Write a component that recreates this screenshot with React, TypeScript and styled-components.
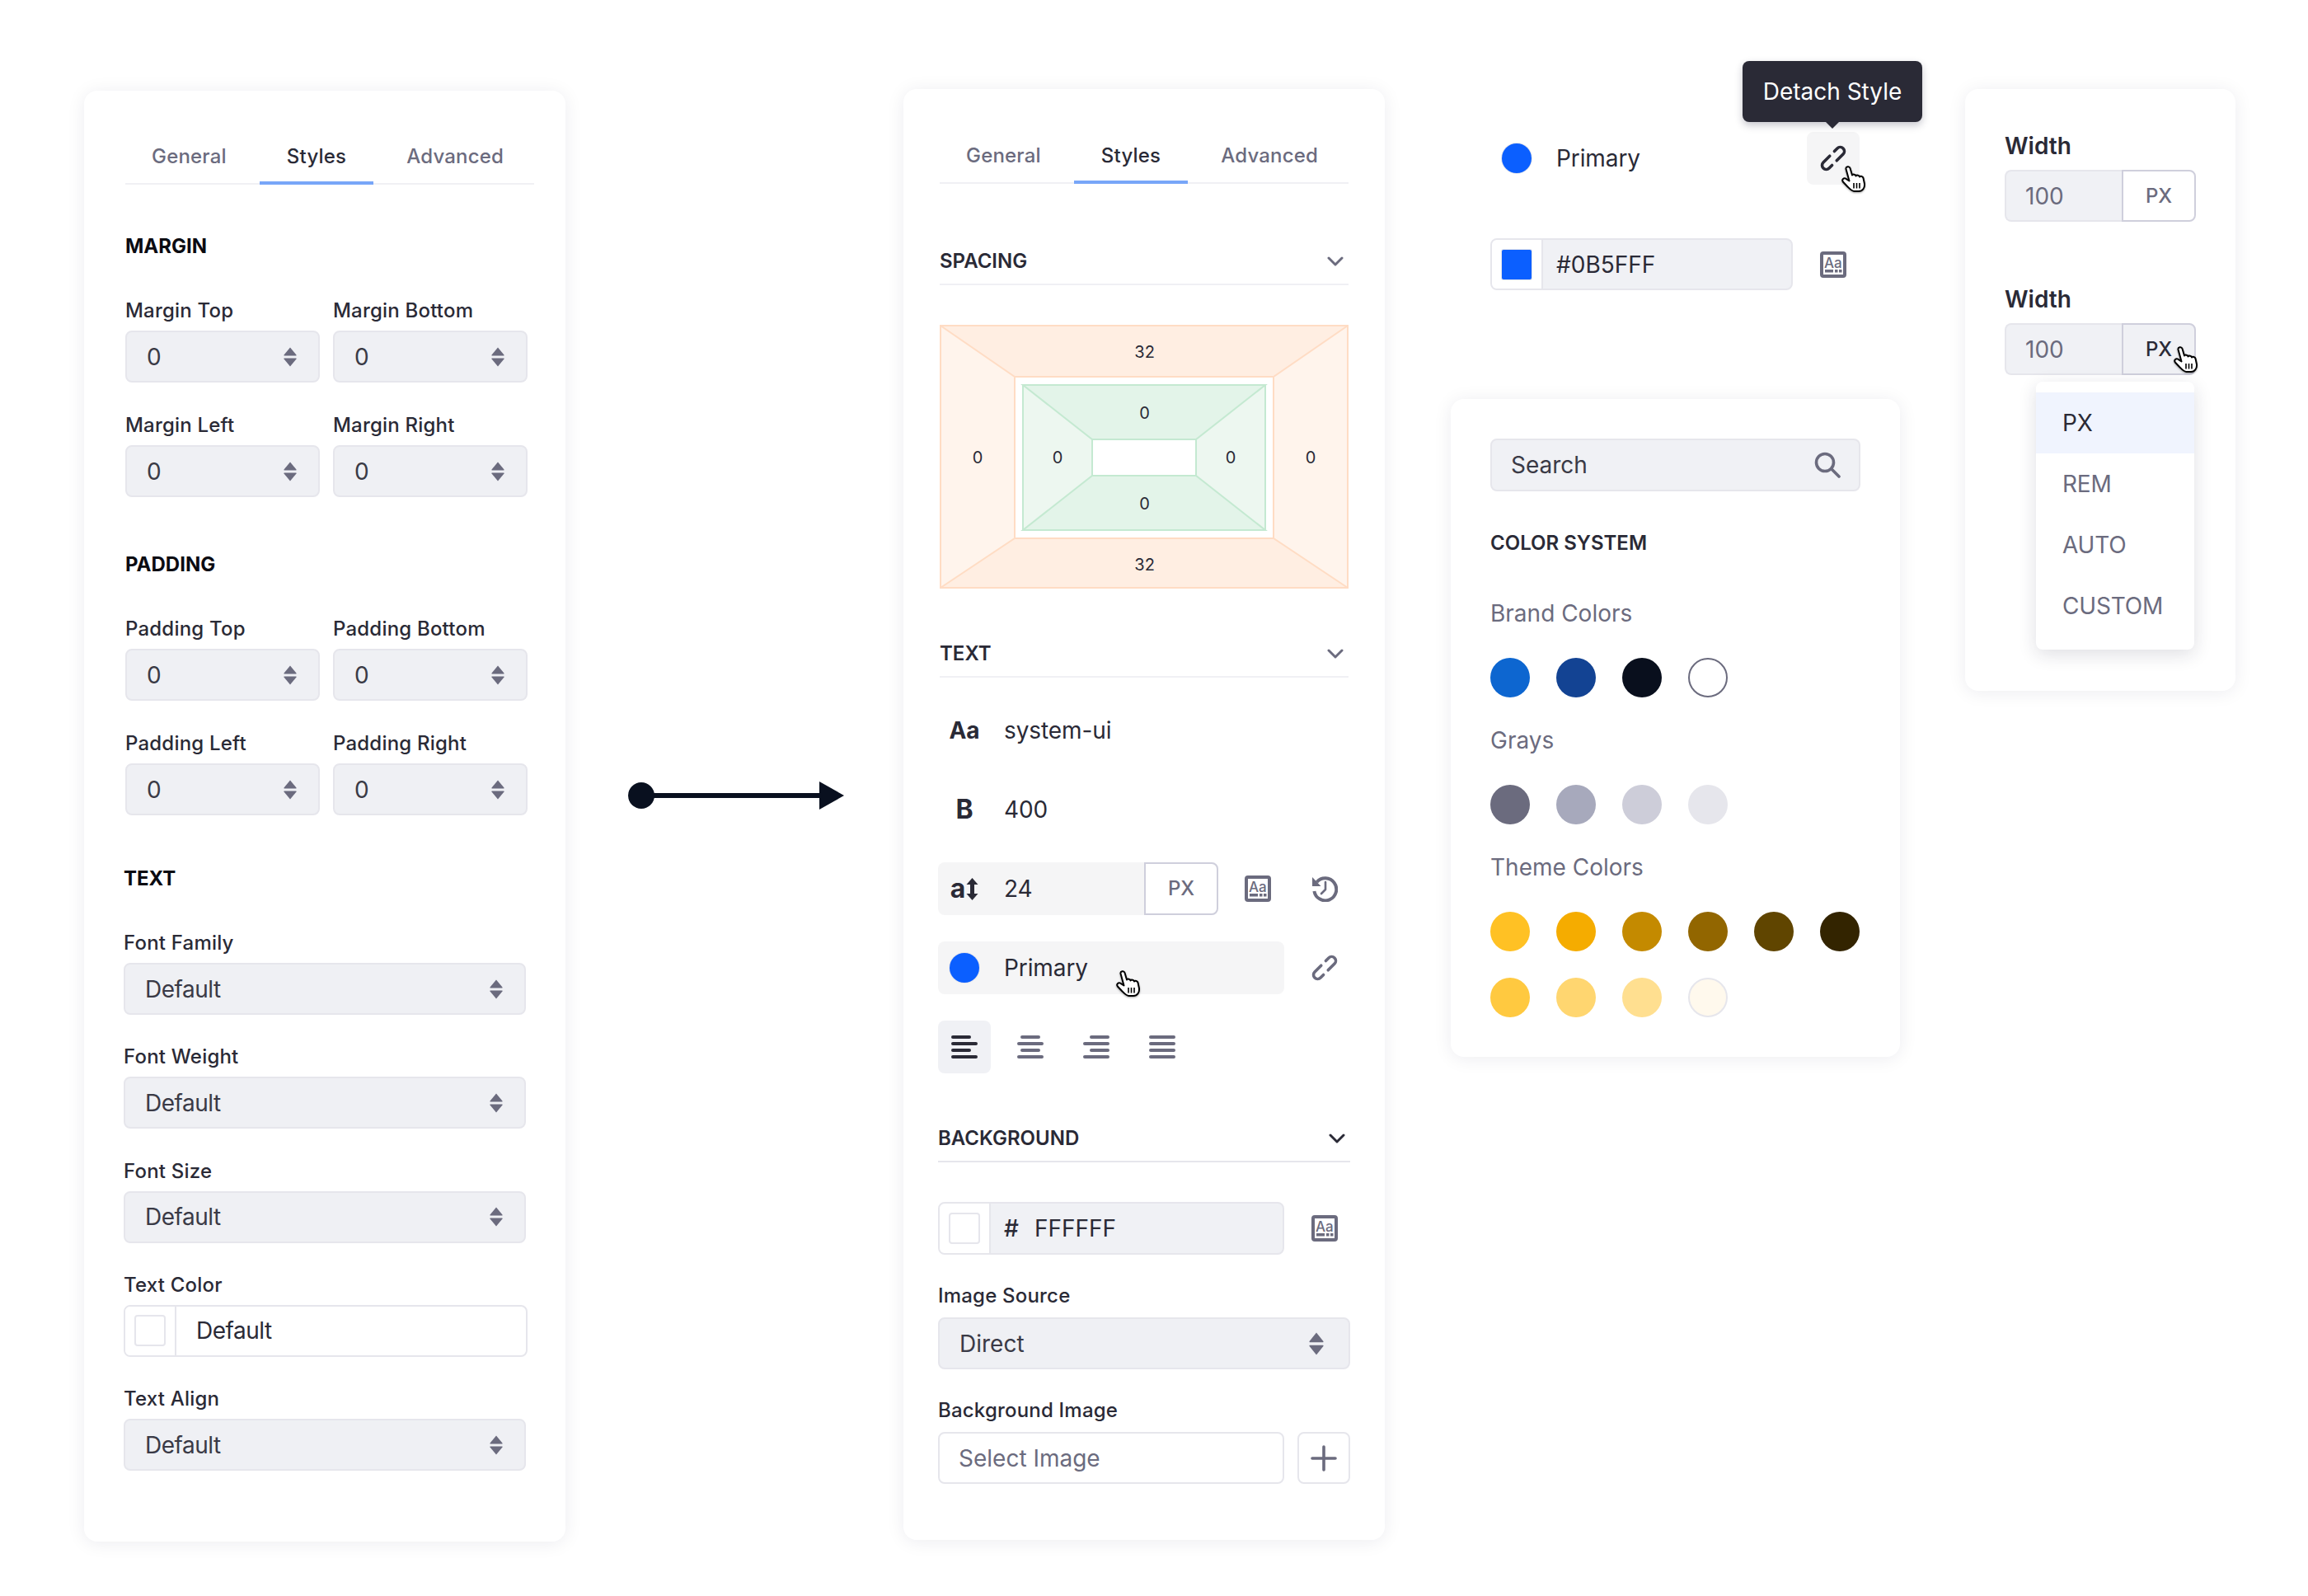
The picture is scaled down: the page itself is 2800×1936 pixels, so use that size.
import React from 'react';
import styled, { createGlobalStyle } from 'styled-components';

const GlobalStyle = createGlobalStyle`
  html, body {
    margin: 0;
    padding: 0;
    background: #fff;
  }
  body {
    font-family: Inter, "Liberation Sans", sans-serif;
    color: #2a2a36;
  }
  * {
    box-sizing: border-box;
  }
`;

const Page = styled.div`
  width: 2800px;
  height: 1936px;
  padding-left: 102px;
  display: flex;
  align-items: flex-start;
  overflow: hidden;
`;

const Panel = styled.section`
  background: #fff;
  border-radius: 16px;
  box-shadow: 0 2px 22px rgba(30, 30, 60, 0.08);
`;

const StylesPanelLeft = styled(Panel)`
  width: 584px;
  height: 1760px;
  margin-top: 110px;
  padding: 64px 38px 0 50px;
  flex: none;
`;

const StylesPanelRight = styled(Panel)`
  width: 584px;
  height: 1760px;
  margin-top: 108px;
  padding: 65px 44px 0 44px;
  flex: none;
`;

const FlowArrow = styled.svg`
  display: block;
  flex: none;
  width: 262px;
  height: 34px;
  margin: 948px 72px 0 76px;
`;

const Tabs = styled.div`
  display: flex;
  gap: 8px;
  border-bottom: 2px solid #f0f0f4;
`;

const Tab = styled.button<{ $active?: boolean }>`
  border: none;
  background: none;
  font: 500 24px/32px Inter, sans-serif;
  letter-spacing: 0.2px;
  padding: 0 ${(p) => (p.$active ? 33 : 32)}px 14px;
  margin-bottom: -2px;
  color: ${(p) => (p.$active ? '#2a2a36' : '#6b6b7e')};
  border-bottom: 4px solid ${(p) => (p.$active ? '#78a6f8' : 'transparent')};
`;

const GroupTitle = styled.h3<{ $top: number; $shift?: number }>`
  margin: ${(p) => p.$top}px 0 0 ${(p) => p.$shift ?? 0}px;
  font: 700 24px/32px Inter, sans-serif;
  color: #0b0b12;
`;

const FieldGrid = styled.div`
  margin-top: 46px;
  display: grid;
  grid-template-columns: 236px 236px;
  column-gap: 16px;
  row-gap: 36px;
`;

const FieldStack = styled.div<{ $top: number; $gap: number; $shift?: number; $width?: number }>`
  margin: ${(p) => p.$top}px 0 0 ${(p) => p.$shift ?? 0}px;
  width: ${(p) => (p.$width ? `${p.$width}px` : 'auto')};
  display: flex;
  flex-direction: column;
  gap: ${(p) => p.$gap}px;
`;

const Field = styled.div<{ $gap?: number }>`
  display: flex;
  flex-direction: column;
  gap: ${(p) => p.$gap ?? 8}px;
`;

const FieldLabel = styled.label`
  font: 500 24px/32px Inter, sans-serif;
  letter-spacing: 0.2px;
  color: #2a2a36;
`;

const SelectBox = styled.div<{ $right?: number; $left?: number; $tight?: boolean }>`
  height: 63px;
  display: flex;
  align-items: center;
  justify-content: space-between;
  padding: 0 ${(p) => p.$right ?? 26}px 0 ${(p) => p.$left ?? 24}px;
  background: #eff0f4;
  border: 2px solid #e6e6ec;
  border-radius: 8px;
  font: 400 28px/32px Inter, sans-serif;
  letter-spacing: ${(p) => (p.$tight ? '-0.5px' : '0')};
  color: #3a3a46;
`;

const SortSvg = styled.svg`
  display: block;
  flex: none;
`;

const ColorInput = styled.div<{ $width?: number; $height?: number; $plain?: boolean; $wide?: boolean }>`
  width: ${(p) => (p.$width ? `${p.$width}px` : p.$wide ? 'calc(100% + 2px)' : '100%')};
  height: ${(p) => p.$height ?? 63}px;
  flex: none;
  display: flex;
  border: 2px solid #e6e6ec;
  border-radius: 8px;
  overflow: hidden;
  background: ${(p) => (p.$plain ? '#fff' : '#f0f1f5')};
`;

const SwatchCell = styled.div`
  width: 62px;
  flex: none;
  background: #fff;
  border-right: 2px solid #e6e6ec;
  display: flex;
  align-items: center;
  justify-content: center;
`;

const Swatch = styled.span`
  width: 38px;
  height: 38px;
  border-radius: 4px;
  background: #fff;
  border: 2px solid #e6e6ec;
`;

const FilledSwatch = styled.span`
  width: 36px;
  height: 36px;
  border-radius: 2px;
  background: #0b5fff;
  box-shadow: 0 0 0 1px #e6e6ec;
`;

const ColorValue = styled.div<{ $pad?: number; $tight?: boolean }>`
  flex: 1;
  display: flex;
  align-items: center;
  padding-left: ${(p) => p.$pad ?? 16}px;
  font: 400 28px/32px Inter, sans-serif;
  letter-spacing: ${(p) => (p.$tight ? '-0.5px' : '0')};
  color: #2a2a36;
`;

const HashMark = styled.span`
  font-weight: 500;
  margin-right: 19px;
`;

const SectionHeader = styled.div<{ $top: number; $dark?: boolean }>`
  margin-top: ${(p) => p.$top}px;
  height: 47px;
  padding-top: 2px;
  display: flex;
  align-items: flex-start;
  justify-content: space-between;
  font: 600 24px/32px Inter, sans-serif;
  color: #2a2a36;
  border-bottom: 2px solid ${(p) => (p.$dark ? '#e6e6ec' : '#f0f0f4')};
`;

const Chevron = styled.svg`
  display: block;
  width: 20px;
  height: 12px;
  margin: 10px 6px 0 0;
`;

const SpacingDiagram = styled.svg`
  display: block;
  width: 496px;
  height: 320px;
  margin-top: 48px;
  font: 400 20px Inter, sans-serif;
`;

const TextSection = styled.div`
  margin: 32px 0 0 -2px;
  display: flex;
  flex-direction: column;
  gap: 32px;
`;

const PropRow = styled.div`
  height: 64px;
  display: flex;
  align-items: center;
`;

const PropGlyph = styled.span<{ $size: number }>`
  width: 64px;
  flex: none;
  text-align: center;
  display: flex;
  align-items: center;
  justify-content: center;
  gap: 1px;
  font: 700 ${(p) => p.$size}px/32px Inter, sans-serif;
  color: #2a2a36;
`;

const PropValue = styled.span`
  flex: 1;
  padding-left: 16px;
  font: 400 28px/32px Inter, sans-serif;
  letter-spacing: -0.1px;
  color: #2a2a36;
`;

const PropField = styled.div<{ $width: number }>`
  position: relative;
  width: ${(p) => p.$width}px;
  height: 64px;
  flex: none;
  display: flex;
  align-items: center;
  background: #f5f5f6;
  border-radius: 8px;
`;

const UnitBox = styled.div<{ $active?: boolean }>`
  width: 90px;
  height: 100%;
  flex: none;
  display: flex;
  align-items: center;
  justify-content: center;
  background: ${(p) => (p.$active ? '#f0f1f5' : '#fff')};
  border: 2px solid #cfcfdc;
  border-radius: 0 8px 8px 0;
  font: 500 24px/32px Inter, sans-serif;
  color: ${(p) => (p.$active ? '#2a2a36' : '#6b6b7e')};
`;

const ActionIcon = styled.span<{ $left: number }>`
  display: flex;
  flex: none;
  margin-left: ${(p) => p.$left}px;
`;

const AlignRow = styled.div`
  display: flex;
  gap: 16px;
`;

const AlignButton = styled.div<{ $active?: boolean }>`
  width: 64px;
  height: 64px;
  border-radius: 8px;
  display: flex;
  align-items: center;
  justify-content: center;
  background: ${(p) => (p.$active ? '#f0f1f5' : 'transparent')};
`;

const BackgroundSection = styled.div`
  margin: 0 -2px;
`;

const InlineRow = styled.div`
  display: flex;
  align-items: center;
`;

const BackgroundColorRow = styled(InlineRow)`
  margin-top: 48px;
`;

const PlainInput = styled.div`
  width: 420px;
  height: 63px;
  flex: none;
  display: flex;
  align-items: center;
  padding-left: 23px;
  border: 2px solid #e6e6ec;
  border-radius: 8px;
  font: 400 28px/32px Inter, sans-serif;
  color: #6b6b7e;
`;

const AddButton = styled.div`
  width: 65px;
  height: 63px;
  margin-left: 16px;
  display: flex;
  align-items: center;
  justify-content: center;
  border: 2px solid #e6e6ec;
  border-radius: 8px;
`;

const ThirdColumn = styled.div`
  width: 545px;
  margin: 160px 0 0 80px;
  flex: none;
`;

const TokenRow = styled.div`
  width: 448px;
  height: 64px;
  margin-left: 48px;
  display: flex;
  align-items: center;
  justify-content: space-between;
`;

const TokenLabel = styled.div`
  display: flex;
  align-items: center;
  padding-left: 14px;
  font: 400 28px/32px Inter, sans-serif;
  letter-spacing: -0.1px;
  color: #2a2a36;
`;

const Dot = styled.span<{ $gap?: number }>`
  width: 36px;
  height: 36px;
  border-radius: 50%;
  background: #0b5fff;
  margin-right: ${(p) => p.$gap ?? 0}px;
  box-shadow: 0 0 0 1px #e6e6ec;
  flex: none;
`;

const LinkButton = styled.div`
  position: relative;
  width: 64px;
  height: 64px;
  border-radius: 8px;
  background: #f5f5f6;
  display: flex;
  align-items: center;
  justify-content: center;
`;

const Tooltip = styled.div`
  position: absolute;
  left: -78px;
  top: -86px;
  width: 218px;
  height: 74px;
  border-radius: 8px;
  background: #2a2a36;
  color: #fff;
  font: 400 28px/74px Inter, sans-serif;
  text-align: center;
  box-shadow: 0 4px 10px rgba(30, 30, 60, 0.25);

  &::after {
    content: '';
    position: absolute;
    left: 101px;
    bottom: -8px;
    border-left: 8px solid transparent;
    border-right: 8px solid transparent;
    border-top: 8px solid #2a2a36;
  }
`;

const HexRow = styled.div`
  margin: 65px 0 0 48px;
  display: flex;
  align-items: center;
`;

const SwatchPanel = styled(Panel)`
  margin-top: 132px;
  width: 545px;
  height: 798px;
  padding: 48px;
`;

const SearchBox = styled.div`
  height: 64px;
  display: flex;
  align-items: center;
  justify-content: space-between;
  padding: 0 22px 0 23px;
  background: #f0f1f5;
  border: 2px solid #e6e6ec;
  border-radius: 8px;
  font: 400 28px/32px Inter, sans-serif;
  color: #3a3a46;
`;

const SwatchTitle = styled.h3`
  margin: 47px 0 0;
  font: 600 24px/32px Inter, sans-serif;
  color: #2a2a36;
`;

const SwatchGroupLabel = styled.div<{ $top: number }>`
  margin-top: ${(p) => p.$top}px;
  font: 400 28px/32px Inter, sans-serif;
  color: #6b6b7e;
`;

const SwatchGrid = styled.div`
  margin-top: 38px;
  display: grid;
  grid-template-columns: repeat(6, 48px);
  column-gap: 32px;
  row-gap: 32px;
`;

const ColorDot = styled.span<{ $color: string; $ring?: string }>`
  width: 48px;
  height: 48px;
  border-radius: 50%;
  background: ${(p) => p.$color};
  border: ${(p) => (p.$ring ? `2px solid ${p.$ring}` : 'none')};
`;

const WidthPanel = styled(Panel)`
  width: 328px;
  height: 730px;
  margin: 108px 0 0 79px;
  padding: 53px 48px 0;
  flex: none;
`;

const WidthLabel = styled.div<{ $top?: number }>`
  margin: ${(p) => p.$top ?? 0}px 0 13px;
  font: 600 28px/32px Inter, sans-serif;
  color: #2a2a36;
`;

const WidthInput = styled.div`
  position: relative;
  width: 232px;
  height: 63px;
  display: flex;
`;

const WidthValue = styled.div`
  flex: 1;
  display: flex;
  align-items: center;
  padding-left: 23px;
  background: #f0f1f5;
  border: 2px solid #e6e6ec;
  border-right: none;
  border-radius: 8px 0 0 8px;
  font: 400 28px/32px Inter, sans-serif;
  color: #6b6b7e;
`;

const UnitMenu = styled.ul`
  position: absolute;
  left: 38px;
  top: 71px;
  width: 192px;
  height: 325px;
  margin: 0;
  padding: 13px 0 0;
  list-style: none;
  background: #fff;
  border-radius: 8px;
  box-shadow: 0 6px 22px rgba(30, 30, 60, 0.14);
`;

const UnitOption = styled.li<{ $active?: boolean }>`
  height: 74px;
  padding-left: 32px;
  font: 400 28px/74px Inter, sans-serif;
  letter-spacing: -0.2px;
  color: ${(p) => (p.$active ? '#2a2a36' : '#6b6b7e')};
  background: ${(p) => (p.$active ? '#f0f4fe' : 'transparent')};
`;

const CursorSvg = styled.svg<{ $left: number; $top: number }>`
  position: absolute;
  left: ${(p) => p.$left}px;
  top: ${(p) => p.$top}px;
  width: 30px;
  height: 33px;
  filter: drop-shadow(0 1px 1px rgba(0, 0, 0, 0.35));
`;

function SortIcon({ width = 16, height = 24 }: { width?: number; height?: number }) {
  return (
    <SortSvg width={width} height={height} viewBox="0 0 16 24" preserveAspectRatio="none" fill="#6b6b7e">
      <path d="M8 0.5 L15.5 9.5 Q16 10.5 15 10.5 H1 Q0 10.5 0.5 9.5 Z" />
      <path d="M8 23.5 L15.5 14.5 Q16 13.5 15 13.5 H1 Q0 13.5 0.5 14.5 Z" />
    </SortSvg>
  );
}

function ChevronIcon({ color = '#6b6b7e' }: { color?: string }) {
  return (
    <Chevron viewBox="0 0 20 12" fill="none" stroke={color} strokeWidth="3" strokeLinecap="round" strokeLinejoin="round">
      <path d="M2 2 L10 10 L18 2" />
    </Chevron>
  );
}

function StyleIcon() {
  return (
    <svg width="32" height="32" viewBox="0 0 32 32" display="block">
      <rect x="2" y="2" width="28" height="28" rx="2" fill="#fff" stroke="#6b6b7e" strokeWidth="4" />
      <text x="5" y="19.5" fontFamily="Inter, sans-serif" fontSize="17" fontWeight="500" fill="#6b6b7e">Aa</text>
      <rect x="6" y="22" width="10" height="3.5" fill="#6b6b7e" />
      <rect x="18" y="22" width="3.5" height="3.5" fill="#6b6b7e" />
      <rect x="23" y="22" width="3.5" height="3.5" fill="#6b6b7e" />
    </svg>
  );
}

function HistoryIcon() {
  return (
    <svg width="32" height="32" viewBox="0 0 32 32" display="block" fill="none" stroke="#6b6b7e">
      <path d="M6.5 8 A13.5 13.5 0 1 1 3.4 19" strokeWidth="4" />
      <path d="M1 2 V13 H11.5 Z" fill="#6b6b7e" stroke="none" />
      <path d="M17 8 V17 L12 22" strokeWidth="2.6" strokeLinecap="round" strokeLinejoin="round" />
    </svg>
  );
}

function LinkIcon({ color = '#6b6b7e' }: { color?: string }) {
  return (
    <svg width="32" height="32" viewBox="0 0 32 32" display="block" fill="none" stroke={color} strokeWidth="3.6" strokeLinecap="round">
      <g transform="rotate(-45 16 16)">
        <path d="M15 11 H4 a5 5 0 0 0 0 10 H9" />
        <path d="M17 21 H28 a5 5 0 0 0 0 -10 H23" />
      </g>
    </svg>
  );
}

function SearchIcon() {
  return (
    <svg width="32" height="32" viewBox="0 0 32 32" display="block" fill="none" stroke="#6b6b7e" strokeWidth="3.6" strokeLinecap="round">
      <circle cx="13" cy="13" r="10.5" />
      <path d="M21 21 L30 30" />
    </svg>
  );
}

function PlusIcon() {
  return (
    <svg width="32" height="32" viewBox="0 0 32 32" display="block" stroke="#6b6b7e" strokeWidth="3.6" strokeLinecap="round">
      <path d="M16 2 V30 M2 16 H30" />
    </svg>
  );
}

function AlignIcon({ kind, color }: { kind: 'left' | 'center' | 'right' | 'justify'; color: string }) {
  const short = kind === 'justify' ? 32 : 24;
  const x = kind === 'left' || kind === 'justify' ? 0 : kind === 'center' ? 4 : 8;
  return (
    <svg width="32" height="28" viewBox="0 0 32 28" fill={color} display="block">
      <rect x={x} y="0" width={short} height="4" rx="2" />
      <rect x="0" y="8" width="32" height="4" rx="2" />
      <rect x={x} y="16" width={short} height="4" rx="2" />
      <rect x="0" y="24" width="32" height="4" rx="2" />
    </svg>
  );
}

function HandCursor({ left, top }: { left: number; top: number }) {
  return (
    <CursorSvg $left={left} $top={top} viewBox="0 0 30 33">
      <path
        d="M5.5 4C5 1 9.5 0 10.5 3L13 11.5C14 10 17 10.5 17.5 12.5C18.5 11 21.5 11.5 22 13.5C23 12.5 26 12.5 26.5 15L28 22C28.5 27 25.5 31 21 31L15.5 31C12.5 31 10 28 7 25L1.8 19.5C0 17 3 14 5.5 15.8L9.5 18.5Z"
        fill="#fff"
        stroke="#000"
        strokeWidth="2"
        strokeLinejoin="round"
      />
      <path d="M15 21 V27.5 M18.5 21 V27.5 M22 21 V27.5" stroke="#000" strokeWidth="1.6" />
    </CursorSvg>
  );
}

function TabBar() {
  return (
    <Tabs>
      <Tab>General</Tab>
      <Tab $active>Styles</Tab>
      <Tab>Advanced</Tab>
    </Tabs>
  );
}

function StepperField({ label }: { label: string }) {
  return (
    <Field>
      <FieldLabel>{label}</FieldLabel>
      <SelectBox>
        0
        <SortIcon />
      </SelectBox>
    </Field>
  );
}

function SelectField({ label }: { label: string }) {
  return (
    <Field>
      <FieldLabel>{label}</FieldLabel>
      <SelectBox $tight>
        Default
        <SortIcon />
      </SelectBox>
    </Field>
  );
}

function LegacyPanel() {
  return (
    <StylesPanelLeft>
      <TabBar />
      <GroupTitle $top={59}>MARGIN</GroupTitle>
      <FieldGrid>
        <StepperField label="Margin Top" />
        <StepperField label="Margin Bottom" />
        <StepperField label="Margin Left" />
        <StepperField label="Margin Right" />
      </FieldGrid>
      <GroupTitle $top={66}>PADDING</GroupTitle>
      <FieldGrid>
        <StepperField label="Padding Top" />
        <StepperField label="Padding Bottom" />
        <StepperField label="Padding Left" />
        <StepperField label="Padding Right" />
      </FieldGrid>
      <GroupTitle $top={61} $shift={-2}>TEXT</GroupTitle>
      <FieldStack $top={46} $gap={35.3} $shift={-2} $width={488}>
        <SelectField label="Font Family" />
        <SelectField label="Font Weight" />
        <SelectField label="Font Size" />
        <Field>
          <FieldLabel>Text Color</FieldLabel>
          <ColorInput $plain $wide>
            <SwatchCell>
              <Swatch />
            </SwatchCell>
            <ColorValue $pad={24} $tight>Default</ColorValue>
          </ColorInput>
        </Field>
        <SelectField label="Text Align" />
      </FieldStack>
    </StylesPanelLeft>
  );
}

function BoxModel() {
  const peachLine = '#ffdcc4';
  const greenLine = '#c4e9d1';
  return (
    <SpacingDiagram viewBox="0 0 496 320">
      <rect x="1" y="1" width="494" height="318" fill="#fff4ec" stroke={peachLine} strokeWidth="2" />
      <path d="M1 1 H495 L405 63 H91 Z" fill="#ffeee2" stroke={peachLine} strokeWidth="2" />
      <path d="M1 319 H495 L405 259 H91 Z" fill="#ffeee2" stroke={peachLine} strokeWidth="2" />
      <rect x="91" y="63" width="314" height="196" fill="#fff" stroke={peachLine} strokeWidth="2" />
      <rect x="101" y="73" width="294" height="176" fill="#edf7f0" stroke={greenLine} strokeWidth="2" />
      <path d="M101 73 H395 L311 139 H185 Z" fill="#e3f4e9" stroke={greenLine} strokeWidth="2" />
      <path d="M101 249 H395 L311 183 H185 Z" fill="#e3f4e9" stroke={greenLine} strokeWidth="2" />
      <rect x="185" y="139" width="126" height="44" fill="#fff" stroke={greenLine} strokeWidth="2" />
      <g fill="#2a2a36" textAnchor="middle" dominantBaseline="central">
        <text x="248.6" y="33">32</text>
        <text x="248.6" y="291">32</text>
        <text x="46" y="161">0</text>
        <text x="450" y="161">0</text>
        <text x="143" y="161">0</text>
        <text x="353" y="161">0</text>
        <text x="248.6" y="107">0</text>
        <text x="248.6" y="217">0</text>
      </g>
    </SpacingDiagram>
  );
}

function RedesignPanel() {
  return (
    <StylesPanelRight>
      <TabBar />
      <SectionHeader $top={76}>
        SPACING
        <ChevronIcon />
      </SectionHeader>
      <BoxModel />
      <SectionHeader $top={61}>
        TEXT
        <ChevronIcon />
      </SectionHeader>
      <TextSection>
        <PropRow>
          <PropGlyph $size={28}>Aa</PropGlyph>
          <PropValue>system-ui</PropValue>
        </PropRow>
        <PropRow>
          <PropGlyph $size={32}>B</PropGlyph>
          <PropValue>400</PropValue>
        </PropRow>
        <PropRow>
          <PropField $width={340}>
            <PropGlyph $size={32}>
              a
              <svg width="15" height="27" viewBox="0 0 15 27" fill="#2a2a36">
                <path d="M7.5 0 L14.5 8 H10 V19 H14.5 L7.5 27 L0.5 19 H5 V8 H0.5 Z" />
              </svg>
            </PropGlyph>
            <PropValue>24</PropValue>
            <UnitBox>PX</UnitBox>
          </PropField>
          <ActionIcon $left={32}>
            <StyleIcon />
          </ActionIcon>
          <ActionIcon $left={49}>
            <HistoryIcon />
          </ActionIcon>
        </PropRow>
        <PropRow>
          <PropField $width={420}>
            <PropGlyph $size={28}>
              <Dot />
            </PropGlyph>
            <PropValue>Primary</PropValue>
            <HandCursor left={216} top={35} />
          </PropField>
          <ActionIcon $left={33}>
            <LinkIcon />
          </ActionIcon>
        </PropRow>
        <AlignRow>
          <AlignButton $active>
            <AlignIcon kind="left" color="#2a2a36" />
          </AlignButton>
          <AlignButton>
            <AlignIcon kind="center" color="#6b6b7e" />
          </AlignButton>
          <AlignButton>
            <AlignIcon kind="right" color="#6b6b7e" />
          </AlignButton>
          <AlignButton>
            <AlignIcon kind="justify" color="#6b6b7e" />
          </AlignButton>
        </AlignRow>
      </TextSection>
      <BackgroundSection>
        <SectionHeader $top={61} $dark>
          BACKGROUND
          <ChevronIcon color="#2a2a36" />
        </SectionHeader>
        <BackgroundColorRow>
          <ColorInput $width={420} $height={64}>
            <SwatchCell>
              <Swatch />
            </SwatchCell>
            <ColorValue>
              <HashMark>#</HashMark>
              FFFFFF
            </ColorValue>
          </ColorInput>
          <ActionIcon $left={33}>
            <StyleIcon />
          </ActionIcon>
        </BackgroundColorRow>
        <FieldStack $top={34} $gap={34}>
          <Field $gap={10}>
            <FieldLabel>Image Source</FieldLabel>
            <SelectBox $right={30}>
              Direct
              <SortIcon width={18} height={28} />
            </SelectBox>
          </Field>
          <Field $gap={10}>
            <FieldLabel>Background Image</FieldLabel>
            <InlineRow>
              <PlainInput>Select Image</PlainInput>
              <AddButton>
                <PlusIcon />
              </AddButton>
            </InlineRow>
          </Field>
        </FieldStack>
      </BackgroundSection>
    </StylesPanelRight>
  );
}

const brandColors = ['#0d66d0', '#134393', '#090f1d'];
const grayColors = ['#6b6b7e', '#a7a9bc', '#cdcdd9', '#e6e6ec'];
const themeColors = [
  '#ffc124',
  '#f5ac00',
  '#c48a00',
  '#926600',
  '#604500',
  '#332400',
  '#ffc940',
  '#ffd670',
  '#ffdf90',
];

function ColorColumn() {
  return (
    <ThirdColumn>
      <TokenRow>
        <TokenLabel>
          <Dot $gap={30} />
          Primary
        </TokenLabel>
        <LinkButton>
          <Tooltip>Detach Style</Tooltip>
          <LinkIcon color="#2a2a36" />
          <HandCursor left={42} top={41} />
        </LinkButton>
      </TokenRow>
      <HexRow>
        <ColorInput $width={367}>
          <SwatchCell>
            <FilledSwatch />
          </SwatchCell>
          <ColorValue>#0B5FFF</ColorValue>
        </ColorInput>
        <ActionIcon $left={33}>
          <StyleIcon />
        </ActionIcon>
      </HexRow>
      <SwatchPanel>
        <SearchBox>
          Search
          <SearchIcon />
        </SearchBox>
        <SwatchTitle>COLOR SYSTEM</SwatchTitle>
        <SwatchGroupLabel $top={53}>Brand Colors</SwatchGroupLabel>
        <SwatchGrid>
          {brandColors.map((c) => (
            <ColorDot key={c} $color={c} />
          ))}
          <ColorDot $color="#fff" $ring="#6b6b7e" />
        </SwatchGrid>
        <SwatchGroupLabel $top={36}>Grays</SwatchGroupLabel>
        <SwatchGrid>
          {grayColors.map((c) => (
            <ColorDot key={c} $color={c} />
          ))}
        </SwatchGrid>
        <SwatchGroupLabel $top={36}>Theme Colors</SwatchGroupLabel>
        <SwatchGrid>
          {themeColors.map((c) => (
            <ColorDot key={c} $color={c} />
          ))}
          <ColorDot $color="#fff9ed" $ring="#e6e6ec" />
        </SwatchGrid>
      </SwatchPanel>
    </ThirdColumn>
  );
}

function UnitColumn() {
  return (
    <WidthPanel>
      <WidthLabel>Width</WidthLabel>
      <WidthInput>
        <WidthValue>100</WidthValue>
        <UnitBox>PX</UnitBox>
      </WidthInput>
      <WidthLabel $top={78}>Width</WidthLabel>
      <WidthInput>
        <WidthValue>100</WidthValue>
        <UnitBox $active>PX</UnitBox>
        <HandCursor left={205} top={28} />
        <UnitMenu>
          <UnitOption $active>PX</UnitOption>
          <UnitOption>REM</UnitOption>
          <UnitOption>AUTO</UnitOption>
          <UnitOption>CUSTOM</UnitOption>
        </UnitMenu>
      </WidthInput>
    </WidthPanel>
  );
}

export default function App() {
  return (
    <Page>
      <GlobalStyle />
      <LegacyPanel />
      <FlowArrow viewBox="0 0 262 34">
        <circle cx="16" cy="17" r="16" fill="#09101f" />
        <rect x="16" y="14" width="220" height="6" fill="#09101f" />
        <path d="M232 0 L262 17 L232 34 Z" fill="#09101f" />
      </FlowArrow>
      <RedesignPanel />
      <ColorColumn />
      <UnitColumn />
    </Page>
  );
}
